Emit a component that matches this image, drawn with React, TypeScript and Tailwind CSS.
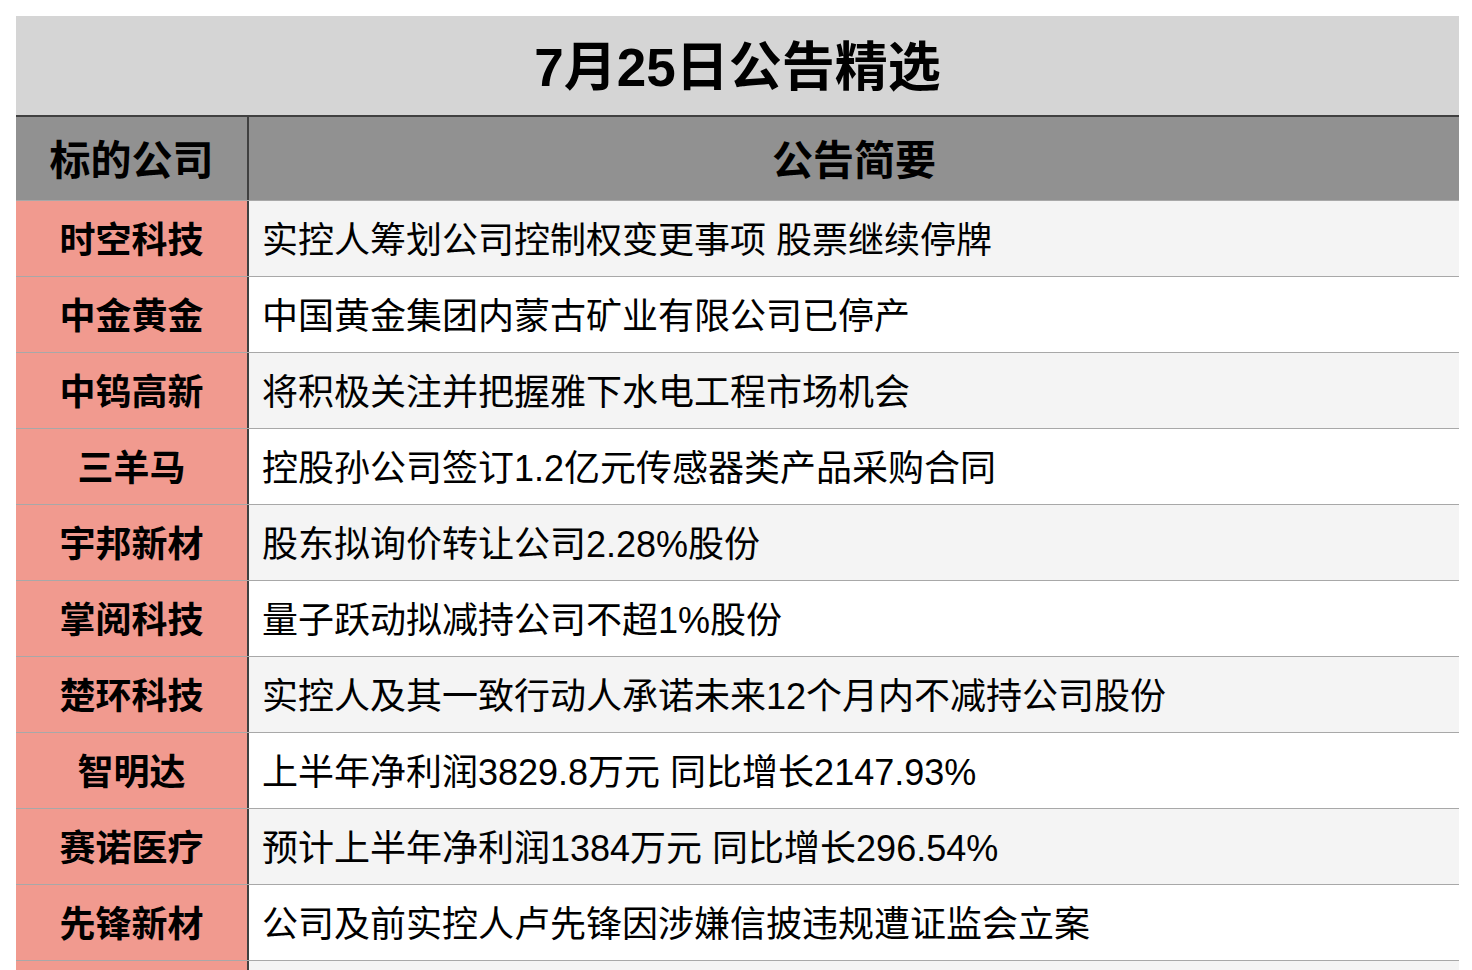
const rows: [string, string][] = [
  ['时空科技', '实控人筹划公司控制权变更事项 股票继续停牌'],
  ['中金黄金', '中国黄金集团内蒙古矿业有限公司已停产'],
  ['中钨高新', '将积极关注并把握雅下水电工程市场机会'],
  ['三羊马', '控股孙公司签订1.2亿元传感器类产品采购合同'],
  ['宇邦新材', '股东拟询价转让公司2.28%股份'],
  ['掌阅科技', '量子跃动拟减持公司不超1%股份'],
  ['楚环科技', '实控人及其一致行动人承诺未来12个月内不减持公司股份'],
  ['智明达', '上半年净利润3829.8万元 同比增长2147.93%'],
  ['赛诺医疗', '预计上半年净利润1384万元 同比增长296.54%'],
  ['先锋新材', '公司及前实控人卢先锋因涉嫌信披违规遭证监会立案'],
  ['', ''],
]

export default function App() {
  return (
    <div className="min-h-[970px] bg-white pt-4 pl-4 font-['Liberation_Sans','Noto_Sans_CJK_SC',sans-serif] text-black">
      <div className="w-[1443px]">
        <div className="flex h-[99px] items-center justify-center bg-[#d5d5d5] pt-[4px] text-[53px] font-bold">
          7月25日公告精选
        </div>
        <div className="flex h-[86px] border-t-2 border-b border-t-[#404040] border-b-[#a8a8a8] bg-[#919191] text-[41px] font-bold">
          <div className="flex w-[231px] items-center justify-center pt-[6px]">标的公司</div>
          <div className="flex flex-1 items-center justify-center border-l-2 border-[#404040] pt-[6px]">
            公告简要
          </div>
        </div>
        {rows.map(([name, text], i) => (
          <div key={i} className="flex h-[76px] border-b border-[#a8a8a8]">
            <div className="flex w-[231px] items-center justify-center bg-[#f19a8f] pt-[5px] text-[36px] font-bold">
              {name}
            </div>
            <div
              className={
                'flex flex-1 items-center border-l-2 border-[#404040] pt-[5px] pl-[13px] text-[36px] ' +
                (i % 2 === 0 ? 'bg-[#f4f4f4]' : 'bg-white')
              }
            >
              {text}
            </div>
          </div>
        ))}
      </div>
    </div>
  )
}
